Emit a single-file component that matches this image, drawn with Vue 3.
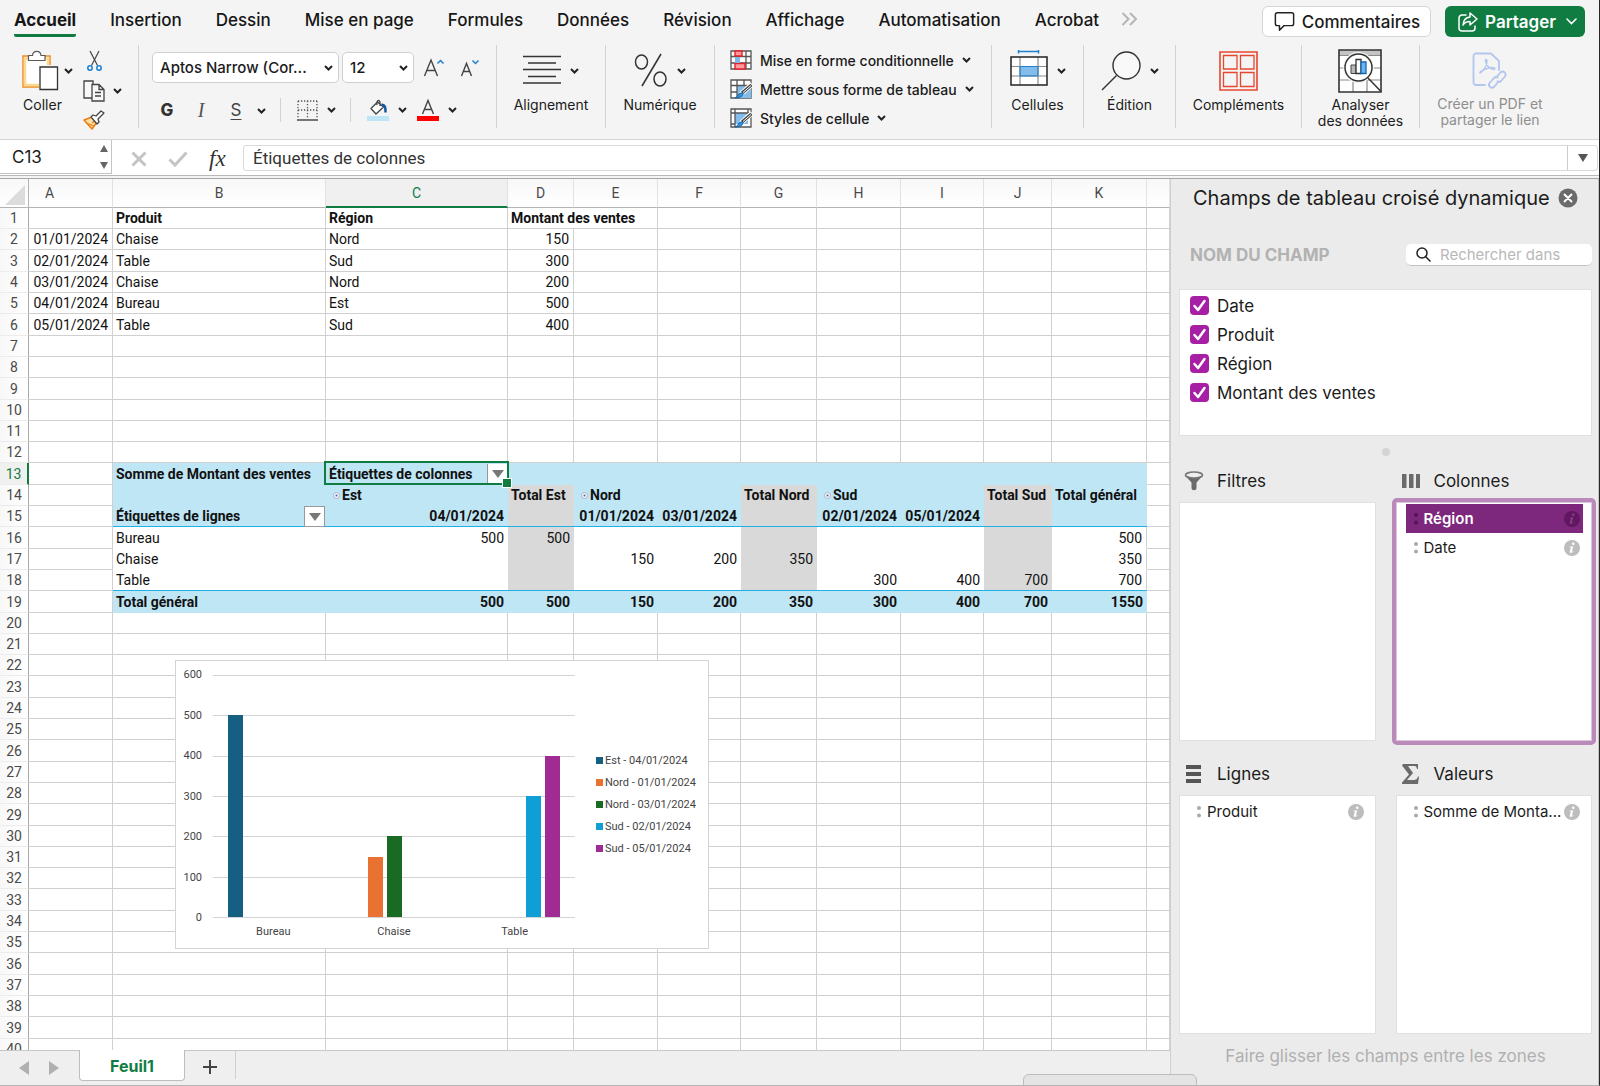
<script setup>
import { ref } from 'vue'

const tabs = ['Accueil', 'Insertion', 'Dessin', 'Mise en page', 'Formules', 'Données', 'Révision', 'Affichage', 'Automatisation', 'Acrobat']
const letters = ['A', 'B', 'C', 'D', 'E', 'F', 'G', 'H', 'I', 'J', 'K', 'L']

const L = (text, extra = '') => ({ text, cls: 'left ' + extra })
const R = (text, extra = '') => ({ text, cls: 'right ' + extra })

const content = {
  1: { B: L('Produit', 'bold'), C: L('Région', 'bold'), D: L('Montant des ventes', 'bold') },
  2: { A: R('01/01/2024'), B: L('Chaise'), C: L('Nord'), D: R('150') },
  3: { A: R('02/01/2024'), B: L('Table'), C: L('Sud'), D: R('300') },
  4: { A: R('03/01/2024'), B: L('Chaise'), C: L('Nord'), D: R('200') },
  5: { A: R('04/01/2024'), B: L('Bureau'), C: L('Est'), D: R('500') },
  6: { A: R('05/01/2024'), B: L('Table'), C: L('Sud'), D: R('400') },
  13: { B: L('Somme de Montant des ventes'), C: L('Étiquettes de colonnes', 'active') },
  14: { C: L('Est', 'heading'), D: L('Total Est'), E: L('Nord', 'heading'), G: L('Total Nord'), H: L('Sud', 'heading'), J: L('Total Sud'), K: L('Total général') },
  15: { B: L('Étiquettes de lignes', 'filter'), C: R('04/01/2024'), E: R('01/01/2024'), F: R('03/01/2024'), H: R('02/01/2024'), I: R('05/01/2024') },
  16: { B: L('Bureau'), C: R('500'), D: R('500'), K: R('500') },
  17: { B: L('Chaise'), E: R('150'), F: R('200'), G: R('350'), K: R('350') },
  18: { B: L('Table'), H: R('300'), I: R('400'), J: R('700'), K: R('700') },
  19: { B: L('Total général'), C: R('500'), D: R('500'), E: R('150'), F: R('200'), G: R('350'), H: R('300'), I: R('400'), J: R('700'), K: R('1550') }
}

const rows = Array.from({ length: 40 }, (_, i) => {
  const n = i + 1
  const cells = []
  for (const col of letters) {
    if (n === 1 && col === 'E') continue
    const c = (content[n] && content[n][col]) || { text: '', cls: '' }
    let cls = c.cls
    const inPivot = n >= 13 && n <= 19 && col !== 'A' && col !== 'L'
    if (inPivot) {
      cls += ' pivot'
      if (n <= 15 || n === 19) cls += ' band'
      if (n >= 14 && n <= 18 && 'DGJ'.includes(col)) cls += ' subtotal'
      if (n === 15 || n === 18) cls += ' rule'
      if (col === 'K' && n >= 16 && n <= 18) cls += ' edge'
    }
    cells.push({ col, text: c.text, cls, span: n === 1 && col === 'D' ? 2 : 1 })
  }
  return { n, cells }
})

const series = [
  { name: 'Est - 04/01/2024', color: '#156082' },
  { name: 'Nord - 01/01/2024', color: '#e97132' },
  { name: 'Nord - 03/01/2024', color: '#196b24' },
  { name: 'Sud - 02/01/2024', color: '#0f9ed5' },
  { name: 'Sud - 05/01/2024', color: '#a02b93' }
]
const categories = [
  { name: 'Bureau', values: [500, 0, 0, 0, 0] },
  { name: 'Chaise', values: [0, 150, 200, 0, 0] },
  { name: 'Table', values: [0, 0, 0, 300, 400] }
]
const ticks = [600, 500, 400, 300, 200, 100, 0]

const fields = ref([
  { name: 'Date', on: true },
  { name: 'Produit', on: true },
  { name: 'Région', on: true },
  { name: 'Montant des ventes', on: true }
])
const zones = [
  { key: 'filtres', title: 'Filtres', items: [] },
  { key: 'colonnes', title: 'Colonnes', items: ['Région', 'Date'], target: true },
  { key: 'lignes', title: 'Lignes', items: ['Produit'] },
  { key: 'valeurs', title: 'Valeurs', items: ['Somme de Monta...'] }
]
</script>

<template>
  <div class="app">
    <header class="ribbon">
      <div class="top">
        <nav class="tabs">
          <button v-for="(t, i) in tabs" :key="t" class="tab" :class="{ current: i === 0 }">{{ t }}</button>
          <button class="more" aria-label="Plus d’onglets">
            <svg width="17" height="14" viewBox="0 0 17 14" fill="none" stroke="#b5b5b5" stroke-width="2"><path d="M1.5 1l6 6-6 6M9 1l6 6-6 6" /></svg>
          </button>
        </nav>
        <div class="actions">
          <button class="comments">
            <svg width="21" height="21" viewBox="0 0 23 22" fill="none" stroke="#222" stroke-width="1.6" stroke-linejoin="round"><path d="M3.5 1.5h16a2 2 0 0 1 2 2v10a2 2 0 0 1-2 2H11l-5 5v-5H3.5a2 2 0 0 1-2-2v-10a2 2 0 0 1 2-2z" /></svg>
            <span>Commentaires</span>
          </button>
          <button class="share">
            <svg width="20" height="20" viewBox="0 0 20 20" fill="none" stroke="#fff" stroke-width="1.5" stroke-linejoin="round" stroke-linecap="round"><path d="M8 3H4a3 3 0 0 0-3 3v10a3 3 0 0 0 3 3h10a3 3 0 0 0 3-3v-2" /><path d="M12 1l7 6-7 6V9.500c-3.500 0-5.500 1-7 3.500.3-4.500 2.800-7.500 7-8z" /></svg>
            <span>Partager</span>
            <svg class="share-chev" width="11" height="7" viewBox="0 0 11 7" fill="none" stroke="#fff" stroke-width="1.6" stroke-linecap="round"><path d="M1 1l4.500 4.500L10 1" /></svg>
          </button>
        </div>
      </div>

      <div class="tools">
        <section class="group clipboard">
          <button class="big">
            <span class="big-icon">
              <svg width="38" height="42" viewBox="0 0 38 42" fill="none"><path d="M2 6h27v31H2z" fill="#fff" stroke="#ee8a1d" stroke-width="1.5" /><path d="M4 8.500h23V35H4z" stroke="#f9d991" stroke-width="2.5" /><path d="M7.500 10.500V5.500h4c.5-5.500 8-5.500 8.500 0h4v5z" fill="#fff" stroke="#5a5a5a" stroke-width="1.2" /><path d="M18 15h19v26H18z" fill="#f5f5f5" /><path d="M19 17h17.500v22.500H19z" fill="#fff" stroke="#333" stroke-width="1.3" /></svg>
              <svg class="chev" viewBox="0 0 9 6"><path d="M1 1l3.500 3.500L8 1" /></svg>
            </span>
            <span>Coller</span>
          </button>
          <div class="minis">
            <button aria-label="Couper"><svg width="15" height="22" viewBox="0 0 15 22" fill="none"><path d="M3 1l7.500 14.500M12 1L4.500 15.500" stroke="#444" stroke-width="1.2" /><circle cx="3" cy="18" r="2.2" stroke="#1c7fd0" stroke-width="1.5" /><circle cx="12" cy="18" r="2.2" stroke="#1c7fd0" stroke-width="1.5" /></svg></button>
            <button class="pair" aria-label="Copier"><svg width="22" height="22" viewBox="0 0 22 22" fill="#f8f8f8" stroke="#444" stroke-width="1.3"><path d="M9 18H1V1h9v4" /><path d="M9 4.500h7l5 5v11.500H9zM16 4.500v5h5M12 12.500h6M12 16h6" /></svg><svg class="chev" viewBox="0 0 9 6"><path d="M1 1l3.500 3.500L8 1" /></svg></button>
            <button aria-label="Reproduire la mise en forme"><svg width="22" height="20" viewBox="0 0 22 20"><path d="M1 10l8-3 5 5-5 7z" fill="#fbe0a6" stroke="#ee7d11" stroke-width="1.5" stroke-linejoin="round" /><path d="M3 13l8 3M9 13l3-2" stroke="#ee7d11" stroke-width="1.3" /><path d="M8 7l2-2 3 1 5-5 3 2-6 6 1 3-2 2z" fill="#fff" stroke="#444" stroke-width="1.3" stroke-linejoin="round" /></svg></button>
          </div>
        </section>

        <section class="group font">
          <div class="line">
            <span class="pick family"><select aria-label="Police"><option>Aptos Narrow (Cor...</option></select><svg class="chev" viewBox="0 0 9 6"><path d="M1 1l3.500 3.500L8 1" /></svg></span>
            <span class="pick size"><select aria-label="Taille"><option>12</option></select><svg class="chev" viewBox="0 0 9 6"><path d="M1 1l3.500 3.500L8 1" /></svg></span>
            <button class="grow" aria-label="Augmenter la taille"><svg width="22" height="20" viewBox="0 0 22 20" fill="none"><path d="M1.500 18L8 2l6.500 16M4 12.500h8" stroke="#444" stroke-width="1.4" /><path d="M14.500 5.500l3-3 3 3" stroke="#1c7fd0" stroke-width="1.5" /></svg></button>
            <button class="shrink" aria-label="Réduire la taille"><svg width="20" height="20" viewBox="0 0 20 20" fill="none"><path d="M1.500 18L6.500 5.500 11.500 18M3.500 13.500h6" stroke="#444" stroke-width="1.4" /><path d="M12.500 2.500l3 3 3-3" stroke="#1c7fd0" stroke-width="1.5" /></svg></button>
          </div>
          <div class="line styles">
            <button class="b">G</button>
            <button class="i">I</button>
            <button class="s">S</button>
            <button aria-label="Soulignement"><svg class="chev" viewBox="0 0 9 6"><path d="M1 1l3.500 3.500L8 1" /></svg></button>
            <i class="bar"></i>
            <button class="pair" aria-label="Bordures"><svg width="21" height="21" viewBox="0 0 21 21" fill="none" stroke="#555" stroke-width="1.3"><path d="M1 1h19M1 10h19M1 1v18M10.500 1v18M20 1v18" stroke-dasharray="1.3 1.7" /><path d="M0 20h21" stroke-width="1.6" /></svg><svg class="chev" viewBox="0 0 9 6"><path d="M1 1l3.500 3.500L8 1" /></svg></button>
            <i class="bar"></i>
            <button class="pair" aria-label="Remplissage"><svg width="22" height="22" viewBox="0 0 22 22" fill="none"><path d="M0 17h22v5H0z" fill="#bde5f5" /><path d="M4 9.500L10.500 3l6 5-7.500 7zM10 6c-1-5 3-6 3-2v3" fill="#fff" stroke="#444" stroke-width="1.3" stroke-linejoin="round" /><path d="M14.500 5.500c4 .5 4 3 4 8" stroke="#15599b" stroke-width="2.5" /></svg><svg class="chev" viewBox="0 0 9 6"><path d="M1 1l3.500 3.500L8 1" /></svg></button>
            <button class="pair color" aria-label="Couleur de police"><svg width="22" height="22" viewBox="0 0 22 22" fill="none"><path d="M0 17h22v5H0z" fill="#f00" /><path d="M5.500 15L11 1.500 16.500 15M7.500 10.500h7" stroke="#444" stroke-width="1.4" /></svg><svg class="chev" viewBox="0 0 9 6"><path d="M1 1l3.500 3.500L8 1" /></svg></button>
          </div>
        </section>

        <section class="group w-align">
          <button class="big">
            <span class="big-icon"><svg width="38" height="42" viewBox="0 0 38 42" stroke="#333" stroke-width="1.4"><path d="M0 6.500h38M5 13h28M0 19.500h38M5 26.500h28M0 33h38" /></svg><svg class="chev" viewBox="0 0 9 6"><path d="M1 1l3.500 3.500L8 1" /></svg></span>
            <span>Alignement</span>
          </button>
        </section>

        <section class="group w-align">
          <button class="big">
            <span class="big-icon"><svg width="34" height="42" viewBox="0 0 34 42" fill="none" stroke="#333" stroke-width="1.5"><ellipse cx="7.500" cy="12" rx="6" ry="7" /><ellipse cx="26" cy="29" rx="6" ry="7" /><path d="M27 4L8 36" /></svg><svg class="chev" viewBox="0 0 9 6"><path d="M1 1l3.500 3.500L8 1" /></svg></span>
            <span>Numérique</span>
          </button>
        </section>

        <section class="group style-list">
          <button class="row-btn">
            <svg width="22" height="20" viewBox="0 0 22 20"><path d="M1 1h20v18H1zM1 6.500h20M1 13h20M6 1v18M16 1v18" fill="#fff" stroke="#555" stroke-width="1.3" /><path d="M5 1h7v5H5zM5 13.500h10V19H5z" fill="#ff9b9b" stroke="#e5202a" stroke-width="1.4" /><path d="M5 7h5v6H5z" fill="#7db8e8" /></svg>
            <span>Mise en forme conditionnelle</span><svg class="chev" viewBox="0 0 9 6"><path d="M1 1l3.500 3.500L8 1" /></svg>
          </button>
          <button class="row-btn">
            <svg width="22" height="20" viewBox="0 0 22 20"><path d="M1 1h20v18H1z" fill="#fff" stroke="#555" stroke-width="1.3" /><path d="M7 6h14v13H7z" fill="#83bdec" /><path d="M1 6.500h20M1 13h6M7 1v18M14 1v5" stroke="#555" stroke-width="1.3" /><path d="M22 5L11 15" stroke="#fff" stroke-width="5" /><path d="M21.500 6L12 14" stroke="#444" stroke-width="3" /><path d="M21 6.500l-8 7" stroke="#fff" stroke-width="1" /><path d="M5 19c3 0 3-5 6-5 4 0 2 5-6 5z" fill="#3493df" stroke="#1467b0" /></svg>
            <span>Mettre sous forme de tableau</span><svg class="chev" viewBox="0 0 9 6"><path d="M1 1l3.500 3.500L8 1" /></svg>
          </button>
          <button class="row-btn">
            <svg width="22" height="20" viewBox="0 0 22 20"><path d="M1 1h20v18H1z" fill="#fff" stroke="#555" stroke-width="1.3" /><path d="M5 5h13v11H5z" fill="#83bdec" /><path d="M1 5h20M5 1v18M18 1v5M1 16h4" stroke="#555" stroke-width="1.3" /><path d="M22 5L11 15" stroke="#fff" stroke-width="5" /><path d="M21.500 6L12 14" stroke="#444" stroke-width="3" /><path d="M21 6.500l-8 7" stroke="#fff" stroke-width="1" /><path d="M5 19c3 0 3-5 6-5 4 0 2 5-6 5z" fill="#3493df" stroke="#1467b0" /></svg>
            <span>Styles de cellule</span><svg class="chev" viewBox="0 0 9 6"><path d="M1 1l3.500 3.500L8 1" /></svg>
          </button>
        </section>

        <section class="group w-cell">
          <button class="big">
            <span class="big-icon"><svg width="38" height="42" viewBox="0 0 38 42" fill="none"><path d="M8.500 1.500h20M8.500 0v3.500M28.500 0v3.500" stroke="#1c7fd0" stroke-width="1.5" /><path d="M1 7h36v28H1z" fill="#fff" /><path d="M10 16.500h18V26H10z" fill="#83bdec" /><path d="M10 7v28M28 7v28M1 16.500h36M1 26h36" stroke="#8a8a8a" stroke-width="1.2" /><path d="M10 16.500h18V26H10z" stroke="#1c7fd0" /><path d="M1 7h36v28H1z" stroke="#222" stroke-width="1.5" /></svg><svg class="chev" viewBox="0 0 9 6"><path d="M1 1l3.500 3.500L8 1" /></svg></span>
            <span>Cellules</span>
          </button>
        </section>

        <section class="group w-cell">
          <button class="big">
            <span class="big-icon"><svg width="40" height="42" viewBox="0 0 40 42" fill="none" stroke="#333" stroke-width="1.4"><circle cx="25.500" cy="15.500" r="13.500" fill="#f9f9f9" /><path d="M15.500 25.500L1 40" /></svg><svg class="chev" viewBox="0 0 9 6"><path d="M1 1l3.500 3.500L8 1" /></svg></span>
            <span>Édition</span>
          </button>
        </section>

        <section class="group w-add">
          <button class="big">
            <span class="big-icon"><svg width="39" height="42" viewBox="0 0 39 42" fill="none" stroke="#e8472f" stroke-width="1.3"><path d="M1 2h37v38H1z" stroke-width="1.6" /><path d="M4.500 5.500H18V19H4.500zM21.500 5.500h13.500V19H21.500zM4.500 22.500H18V36.500H4.500zM21.500 22.500h13.500V36.500H21.500z" /></svg></span>
            <span>Compléments</span>
          </button>
        </section>

        <section class="group w-data">
          <button class="big">
            <span class="big-icon"><svg width="44" height="44" viewBox="0 0 44 44" fill="none"><path d="M1 1h42v42H1z" fill="#fff" /><path d="M1 1h42v5.500H1z" fill="#c4c4c4" /><path d="M1 6.500h42M1 19h42M1 31h42M15 31v12M29 31v12" stroke="#8a8a8a" stroke-width="1.2" /><path d="M1 1h42v42H1z" stroke="#333" stroke-width="1.6" /><circle cx="20.500" cy="18.500" r="15.500" fill="#f5f5f5" /><circle cx="20.500" cy="18.500" r="13.500" fill="#fff" stroke="#333" stroke-width="1.5" /><path d="M30 29l13 13.500" stroke="#333" stroke-width="1.5" /><path d="M13 16h5v8.500h-5z" fill="#b9b9b9" stroke="#444" /><path d="M18 10.500h5v14h-5z" fill="#fff" stroke="#333" stroke-width="1.3" /><path d="M23 13h5v11.500h-5z" fill="#6fb2ec" stroke="#1467b0" stroke-width="1.3" /></svg></span>
            <span>Analyser<br />des données</span>
          </button>
        </section>

        <section class="group w-pdf">
          <button class="big muted">
            <span class="big-icon"><svg width="36" height="40" viewBox="0 0 36 40" fill="none" stroke="#b3c6ee" stroke-width="1.8" stroke-linecap="round" stroke-linejoin="round"><path d="M13 34H4a2.500 2.500 0 0 1-2.500-2.500V5A2.500 2.500 0 0 1 4 2.500h15l8 7.500v9" /><path d="M8 22c4-2 7-8 7-12 0-2-2-2-1.500 0 .5 4 4 8 8 8.500 2 0 1.500-2 0-2-4 0-10 2-13.500 4.500z" stroke-width="1.4" /><path d="M24.500 26l4-4.500c3-2.500 6.500 1 4.500 4l-4 4.500c-1 1-2.500 1-3.500.5M26.500 30.500l-4 5c-3 3-7-.5-5-3.500l4.500-5c1-1 2.500-1.200 3.500-.5" /></svg></span>
            <span>Créer un PDF et<br />partager le lien</span>
          </button>
        </section>
      </div>
    </header>

    <div class="formula">
      <div class="namebox">
        <input value="C13" aria-label="Zone Nom" />
        <svg width="10" height="24" viewBox="0 0 10 24" fill="#666"><path d="M1 7l4-7 4 7zM1 17h8l-4 7z" /></svg>
      </div>
      <div class="fx">
        <svg width="16" height="16" viewBox="0 0 16 16" stroke="#c4c4c4" stroke-width="3"><path d="M1.500 1.500l13 13M14.500 1.500l-13 13" /></svg>
        <svg width="20" height="16" viewBox="0 0 20 16" fill="none" stroke="#c4c4c4" stroke-width="3"><path d="M1.500 8.500l5.500 5.500L18.500 1.500" /></svg>
        <em>fx</em>
      </div>
      <div class="entry">
        <input value="Étiquettes de colonnes" aria-label="Barre de formule" />
        <button aria-label="Développer"><svg width="10" height="8" viewBox="0 0 10 8" fill="#555"><path d="M0 0h10L5 8z" /></svg></button>
      </div>
    </div>

    <div class="work">
      <main class="book">
        <div class="sheet">
          <table>
            <colgroup>
              <col class="c-num" /><col v-for="c in letters" :key="c" :class="'c-' + c" />
            </colgroup>
            <thead>
              <tr>
                <th class="corner"><svg width="20" height="20" viewBox="0 0 20 20"><path d="M20 0v20H0z" fill="#dcdcdc" /></svg></th>
                <th v-for="c in letters" :key="c" :class="['h-' + c, { picked: c === 'C' }]">{{ c === 'L' ? '' : c }}</th>
              </tr>
            </thead>
            <tbody>
              <tr v-for="r in rows" :key="r.n" :class="{ strong: r.n >= 13 && r.n <= 15 || r.n === 19 }">
                <th :class="{ picked: r.n === 13 }">{{ r.n }}</th>
                <td v-for="c in r.cells" :key="c.col" :class="c.cls" :colspan="c.span"><svg v-if="c.cls.includes('heading')" class="toggle" width="7" height="7" viewBox="0 0 7 7"><circle cx="3.500" cy="3.500" r="3" fill="#f2f5fb" stroke="#a9b4cf" /><circle cx="3.500" cy="3.500" r="1" fill="#555f80" /></svg>{{ c.text }}<button v-if="c.cls.includes('filter') || c.cls.includes('active')" class="drop" :aria-label="'Filtrer ' + c.text"><svg width="12" height="8" viewBox="0 0 12 8" fill="#777"><path d="M0 0h12L6 8z" /></svg></button></td>
              </tr>
            </tbody>
          </table>

          <figure class="chart">
            <div class="axis"><span v-for="t in ticks" :key="t">{{ t }}</span></div>
            <div class="area">
              <div class="plot">
                <div class="lines"><i v-for="t in ticks" :key="t"></i></div>
                <div class="cats">
                  <div v-for="c in categories" :key="c.name" class="cat">
                    <b v-for="(v, i) in c.values" :key="i" :style="{ height: v / 6 + '%', background: series[i].color }"></b>
                  </div>
                </div>
              </div>
              <div class="names"><span v-for="c in categories" :key="c.name">{{ c.name }}</span></div>
            </div>
            <ul class="legend">
              <li v-for="s in series" :key="s.name"><i :style="{ background: s.color }"></i>{{ s.name }}</li>
            </ul>
          </figure>
        </div>

        <footer class="sheets">
          <button class="step" aria-label="Feuille précédente"><svg width="10" height="14" viewBox="0 0 10 14" fill="#b0b0b0"><path d="M10 0v14L0 7z" /></svg></button>
          <button class="step" aria-label="Feuille suivante"><svg width="10" height="14" viewBox="0 0 10 14" fill="#b0b0b0"><path d="M0 0v14l10-7z" /></svg></button>
          <button class="sheet-tab">Feuil1</button>
          <button class="add" aria-label="Ajouter une feuille"><svg width="14" height="14" viewBox="0 0 14 14" stroke="#444" stroke-width="2"><path d="M7 0v14M0 7h14" /></svg></button>
        </footer>
      </main>

      <aside class="panel">
        <div class="title">
          <h2>Champs de tableau croisé dynamique</h2>
          <button aria-label="Fermer"><svg width="20" height="20" viewBox="0 0 20 20"><circle cx="10" cy="10" r="9.500" fill="#6a6a6a" /><path d="M6.500 6.500l7 7M13.500 6.500l-7 7" stroke="#fff" stroke-width="2" stroke-linecap="round" /></svg></button>
        </div>
        <div class="search-row">
          <h3>NOM DU CHAMP</h3>
          <label class="search">
            <svg width="15" height="15" viewBox="0 0 15 15" fill="none" stroke="#222" stroke-width="1.5"><circle cx="6" cy="6" r="5" /><path d="M9.500 9.500l5 5" /></svg>
            <input placeholder="Rechercher dans" aria-label="Rechercher dans les champs" />
          </label>
        </div>
        <div class="fields">
          <label v-for="f in fields" :key="f.name"><input v-model="f.on" type="checkbox" /><span>{{ f.name }}</span></label>
        </div>
        <i class="grip"></i>
        <div class="zones">
          <section v-for="z in zones" :key="z.key" class="zone">
            <h4>
              <svg v-if="z.key === 'filtres'" width="20" height="20" viewBox="0 0 20 20"><path d="M1 4.500l6.500 7V17c0 3 5 3 5 0v-5.500l6.500-7z" fill="#6a6a6a" /><ellipse cx="10" cy="4" rx="8.500" ry="3" fill="#eee" stroke="#777" stroke-width="1.6" /></svg>
              <svg v-else-if="z.key === 'colonnes'" width="20" height="20" viewBox="0 0 20 20" fill="#6a6a6a"><path d="M1 3h4.500v14H1zM8 3h4.500v14H8zM15 3h4v14h-4z" /></svg>
              <svg v-else-if="z.key === 'lignes'" width="20" height="20" viewBox="0 0 20 20" fill="#555"><path d="M2 1h15v4H2zM2 8h15v4H2zM2 15h15v4H2z" /></svg>
              <svg v-else width="20" height="20" viewBox="0 0 20 20" fill="#6a6a6a"><path d="M2 0h15v5h-1c-.5-2.500-1-3-4-3H7l5 7-6 7h6c3.500 0 4-1 5-3.500h1L17 20H1v-1.500l7-8-7-9z" /></svg>
              {{ z.title }}
            </h4>
            <ul :class="{ target: z.target }">
              <li v-for="(it, i) in z.items" :key="it" :class="{ chosen: z.target && i === 0 }">
                <svg width="4" height="12" viewBox="0 0 4 12"><circle class="dot" cx="2" cy="2" r="2" /><circle class="dot" cx="2" cy="9.500" r="2" /></svg>
                <span>{{ it }}</span>
                <svg width="16" height="16" viewBox="0 0 16 16"><circle class="info" cx="8" cy="8" r="8" /><circle class="mark" cx="9.200" cy="3.800" r="1.3" /><path class="mark" d="M5.500 6.800l3.800-.5-1.500 5.200c0 .5.600.2 1.500-.6l.3.400c-1.500 1.800-4.200 2.400-3.800.3l1-3.500c.1-.6-.3-.7-1.200-.8z" /></svg>
              </li>
            </ul>
          </section>
        </div>
        <p class="hint">Faire glisser les champs entre les zones</p>
      </aside>
    </div>
    <div class="floating"></div>
  </div>
</template>

<style>
body { background: #f4f4f4; }
</style>

<style scoped>
* { box-sizing: border-box; }
h2, h3, h4, p, ul, figure { margin: 0; padding: 0; }
ul { list-style: none; }
button { border: 0; background: none; padding: 0; margin: 0; font: inherit; color: inherit; }
input, select { font: inherit; color: inherit; border: 0; outline: 0; background: none; padding: 0; margin: 0; }
svg { display: block; flex: none; }

.app {
  position: relative;
  display: flex;
  flex-direction: column;
  height: 100vh;
  overflow: hidden;
  border-right: 1px solid #2a2422;
  border-bottom: 1px solid #b4b4b4;
  font-family: Inter, "Liberation Sans", sans-serif;
  color: #1b1b1b;
}

.ribbon { flex: none; background: #f4f4f4; border-bottom: 1px solid #d4d4d4; padding-bottom: 11px; }
.top { display: flex; justify-content: space-between; height: 42px; padding: 0 14px; }
.tabs { display: flex; gap: 34px; height: 37px; }
.tab { height: 37px; padding-top: 5px; font-size: 17px; font-weight: 500; white-space: nowrap; border-bottom: 3px solid transparent; color: #161616; }
.tab.current { font-weight: 700; border-bottom-color: #107c41; border-radius: 2px; }
.more { margin-left: -12px; }
.actions { display: flex; gap: 14px; padding-top: 6px; }
.comments, .share { display: flex; align-items: center; height: 31px; border-radius: 6px; font-size: 17px; font-weight: 500; }
.comments { background: #fff; border: 1px solid #d6d6d6; padding: 0 10px 0 11px; gap: 7px; }
.share { background: #107c41; color: #fff; font-weight: 600; padding: 0 8px 0 13px; gap: 7px; }
.share-chev { margin-left: 3px; }

.tools { display: flex; height: 86px; }
.group { display: flex; justify-content: center; flex: none; border-right: 1px solid #d2d2d2; margin-top: 3px; height: 83px; }
.chev { width: 9px; height: 6px; fill: none; stroke: #222; stroke-width: 2; }
.big { display: flex; flex-direction: column; align-items: center; font-size: 14px; line-height: 16px; }
.big-icon { display: flex; align-items: center; gap: 9px; height: 44px; margin: 4px 0; }
.big > span:last-child { white-space: nowrap; }
.muted { color: #8e8e8e; }
.clipboard { width: 139px; gap: 10px; padding-left: 4px; }
.clipboard .big-icon { gap: 5px; }
.clipboard .big > span:last-child { padding-right: 8px; }
.minis { display: flex; flex-direction: column; gap: 8px; padding-top: 5px; }
.minis button { padding-left: 4px; height: 22px; }
.minis button + button { padding-left: 0; }
.pair { display: flex; align-items: center; gap: 8px; }
.font { width: 358px; flex-direction: column; justify-content: flex-start; padding: 7px 0 0 13px; gap: 15px; }
.line { display: flex; align-items: center; gap: 3px; height: 31px; }
.pick { display: flex; align-items: center; height: 31px; background: #fff; border: 1px solid #d0d0d0; border-radius: 5px; padding: 0 5px 0 7px; }
.pick select { flex: 1; min-width: 0; appearance: none; font-size: 15px; font-weight: 500; }
.family { width: 187px; }
.size { width: 72px; }
.grow { margin-left: 6px; }
.shrink { margin-left: 12px; }
.styles { height: 24px; padding-left: 8px; gap: 0; font-size: 17px; }
.styles > button:not(.pair) { height: 22px; }
.styles > button:not(.pair) .chev { margin-top: 2px; }
.styles .b { width: 14px; font-weight: 800; color: #333; }
.styles .i { width: 14px; margin-left: 20px; font-family: "Liberation Serif", serif; font-size: 20px; line-height: 22px; font-style: italic; color: #555; }
.styles .s { width: 14px; margin-left: 21px; margin-right: 14px; text-decoration: underline; color: #444; text-underline-offset: 3px; }
.bar { width: 1px; height: 24px; background: #d2d2d2; margin: 0 16px 0 14px; }
.styles .pair { gap: 9px; }
.styles .color { margin-left: 10px; }
.w-align { width: 109px; }
.style-list { width: 277px; flex-direction: column; justify-content: space-between; padding: 5px 0 0 15px; }
.row-btn { display: flex; align-items: center; gap: 8px; height: 20px; font-size: 14px; font-weight: 500; white-space: nowrap; }
.w-cell { width: 92px; }
.w-add { width: 126px; }
.w-data { width: 118px; }
.w-pdf { width: 140px; border-right: 0; }

.formula { flex: none; display: flex; height: 36px; background: #fff; border-bottom: 1px solid #b8b8b8; }
.namebox { display: flex; align-items: center; width: 112px; padding: 0 2px 0 12px; height: 34px; border-right: 1px solid #c4c4c4; border-bottom: 1px solid #c4c4c4; }
.namebox input { flex: 1; min-width: 0; font-size: 17px; }
.fx { display: flex; align-items: center; gap: 21px; padding: 3px 11px 0 19px; }
.fx em { width: 23px; font-family: "Liberation Serif", serif; font-size: 23px; line-height: 26px; color: #333; }
.entry { flex: 1; display: flex; margin: 5px 1px 4px 0; border: 1px solid #d9d9d9; border-radius: 3px; }
.entry input { flex: 1; font-family: Roboto, sans-serif; font-size: 17px; padding-left: 9px; color: #333; }
.entry button { display: flex; align-items: center; justify-content: center; width: 30px; border-left: 1px solid #ccc; }

.work { flex: 1; min-height: 0; display: flex; border-top: 1px solid #a6a6a6; margin-top: 2px; }
.book { flex: 1; min-width: 0; display: flex; flex-direction: column; }
.sheet { position: relative; flex: 1; min-height: 0; overflow: hidden; background: #fff; }
table { width: 100%; table-layout: fixed; border-collapse: separate; border-spacing: 0; font-family: Roboto, sans-serif; font-size: 14px; line-height: 20px; color: #111; }
.c-num { width: 29px; }
.c-A, .c-E, .c-H { width: 84px; }
.c-B { width: 213px; }
.c-C { width: 182px; }
.c-D { width: 66px; }
.c-F, .c-I { width: 83px; }
.c-G { width: 76px; }
.c-J { width: 68px; }
.c-K { width: 95px; }
th, td { padding: 0; white-space: nowrap; border-right: 1px solid #d0d0d0; border-bottom: 1px solid #d0d0d0; }
th { font-weight: 400; color: #4a4a4a; text-align: center; }
thead th { height: 29px; background: linear-gradient(#f8f8f8, #fff); border-right-color: #e2e2e2; border-bottom-color: #b4b4b4; }
thead .h-A { text-align: left; padding-left: 16px; }
thead .picked { background: #f0f0f0; border-bottom: 2px solid #107c41; color: #107c41; }
thead .corner { border-right-color: #b4b4b4; }
.corner svg { margin: 4px 0 0 5px; }
tbody tr { height: 21px; }
tbody tr:nth-child(10n + 3), tbody tr:nth-child(10n + 6), tbody tr:nth-child(10n + 9) { height: 22px; }
tbody th { border-right-color: #a8a8a8; border-bottom-color: #ececec; background: linear-gradient(90deg, #f8f8f8, #fff); }
tbody th.picked { color: #107c41; background: #f0f0f0; border-right: 2px solid #107c41; }
.left { text-align: left; padding-left: 3px; }
.right { text-align: right; padding-right: 4px; }
.bold, .strong td { font-weight: 700; }
.pivot { border-color: transparent; border-right: 0; }
.band { background: #bfe6f5; border-bottom-color: #bfe6f5; }
.subtotal { background: #d9d9d9; border-bottom-color: #d9d9d9; }
.rule { border-bottom-color: #1fb0e6; }
.edge { border-right: 1px solid #d0d0d0; }
.heading { padding-left: 7px; }
.toggle { display: inline-block; margin-right: 2px; vertical-align: 1px; }
.filter, .active { position: relative; }
.drop { position: absolute; right: 1px; top: 0; width: 21px; height: 21px; display: flex; align-items: center; justify-content: center; background: #fff; border: 1px solid #999; }
.active .drop { right: 0; top: 1px; height: 19px; border-width: 0 0 0 1px; }
.active::before { content: ""; position: absolute; inset: -2px -1px -1px -2px; border: 2px solid #107c41; z-index: 1; pointer-events: none; }
.active::after { content: ""; position: absolute; right: -4px; bottom: -4px; width: 8px; height: 8px; background: #107c41; border: 1px solid #fff; z-index: 2; }

.chart { position: absolute; left: 175px; top: 481px; width: 534px; height: 289px; display: flex; background: #fff; border: 1px solid #d4d4d4; font-family: Roboto, sans-serif; font-size: 11px; line-height: 12px; color: #444; }
.axis { width: 26px; height: 255px; margin-top: 8px; display: flex; flex-direction: column; justify-content: space-between; text-align: right; }
.area { width: 362px; margin: 14px 0 0 11px; }
.plot { position: relative; height: 243px; }
.lines { height: 243px; display: flex; flex-direction: column; justify-content: space-between; }
.lines i { height: 1px; background: #d4d4d4; }
.cats { position: absolute; inset: 0 0 1px; display: flex; }
.cat { flex: 1; display: flex; align-items: flex-end; justify-content: center; gap: 4px; }
.cat b { width: 15px; }
.names { display: flex; margin-top: 8px; }
.names span { flex: 1; text-align: center; }
.legend { margin: auto 0 auto 21px; display: flex; flex-direction: column; gap: 10px; }
.legend li { display: flex; align-items: center; gap: 2px; white-space: nowrap; }
.legend i { width: 7px; height: 7px; }

.sheets { flex: none; display: flex; height: 35px; background: #efefef; border-top: 1px solid #c8c8c8; }
.step { width: 30px; display: flex; align-items: center; justify-content: center; }
.step:first-child { margin-left: 9px; }
.sheet-tab { width: 106px; height: 31px; margin: -1px 0 0 10px; background: #fff; border: 1px solid #bdbdbd; border-top: 0; border-radius: 0 0 4px 4px; font-size: 16px; font-weight: 700; color: #107c41; padding-top: 2px; }
.add { width: 51px; height: 28px; display: flex; align-items: center; justify-content: center; border-right: 1px solid #cfcfcf; padding-top: 4px; }

.panel { flex: none; width: 429px; display: flex; flex-direction: column; background: #ebebeb; border-left: 1px solid #cfcfcf; border-right: 1px solid #c6c6c6; padding: 0 6px 0 8px; }
.title { display: flex; align-items: center; justify-content: space-between; height: 38px; padding: 0 14px; }
h2 { font-size: 20px; line-height: 24px; font-weight: 400; white-space: nowrap; }
.search-row { display: flex; align-items: center; justify-content: space-between; margin-top: 27px; height: 22px; padding-left: 11px; }
h3 { font-size: 17px; font-weight: 700; color: #b2b2b2; }
.search { display: flex; align-items: center; gap: 9px; width: 186px; height: 22px; padding: 0 10px; background: #fff; border-radius: 5px; border-bottom: 1px solid #c4c4c4; }
.search input { flex: 1; min-width: 0; font-size: 15px; }
.search input::placeholder { color: #b8b8b8; opacity: 1; }
.fields { margin-top: 23px; height: 147px; background: #fff; border: 1px solid #e0e0e0; padding: 1px 10px; }
.fields label { display: flex; align-items: center; gap: 8px; height: 29px; font-size: 17px; }
.fields input { appearance: none; width: 19px; height: 19px; border-radius: 4px; background: #a71fa5 url("data:image/svg+xml,%3Csvg xmlns='http://www.w3.org/2000/svg' viewBox='0 0 19 19'%3E%3Cpath d='M4.500 10l3.500 4 6.500-9' fill='none' stroke='white' stroke-width='2.500' stroke-linecap='round' stroke-linejoin='round'/%3E%3C/svg%3E"); }
.grip { align-self: center; width: 8px; height: 8px; margin-top: 12px; border-radius: 4px; background: #d4d4d4; }
.zones { display: grid; grid-template-columns: repeat(2, minmax(0, 1fr)); column-gap: 20px; row-gap: 12px; margin-top: 4px; }
h4 { display: flex; align-items: center; gap: 13px; height: 42px; padding-left: 5px; font-size: 17px; font-weight: 400; }
.zone ul { height: 239px; background: #fff; border: 1px solid #e0e0e0; padding: 1px 8px 0 9px; }
.zone ul.target { outline: 4px solid #ba8aba; border-color: #ddc4dd; border-radius: 1px; }
.zone li { display: flex; align-items: center; gap: 6px; height: 29px; padding: 0 3px 0 8px; font-size: 15px; }
.zone li span { flex: 1; min-width: 0; white-space: nowrap; }
.dot { fill: #aaa; }
.info { fill: #bdbdbd; }
.mark { fill: #fff; }
.chosen { background: #7d287d; color: #fff; font-weight: 600; }
.chosen .dot { fill: #561456; }
.chosen .info { fill: #611861; }
.chosen .mark { fill: #8a3a8a; }
.hint { margin-top: 12px; text-align: center; font-size: 17px; line-height: 20px; color: #b0b0b0; white-space: nowrap; }
.floating { position: absolute; left: 1023px; bottom: -8px; width: 174px; height: 19px; background: #e4e4e4; border: 1px solid #bcbcbc; border-radius: 6px; }
</style>
